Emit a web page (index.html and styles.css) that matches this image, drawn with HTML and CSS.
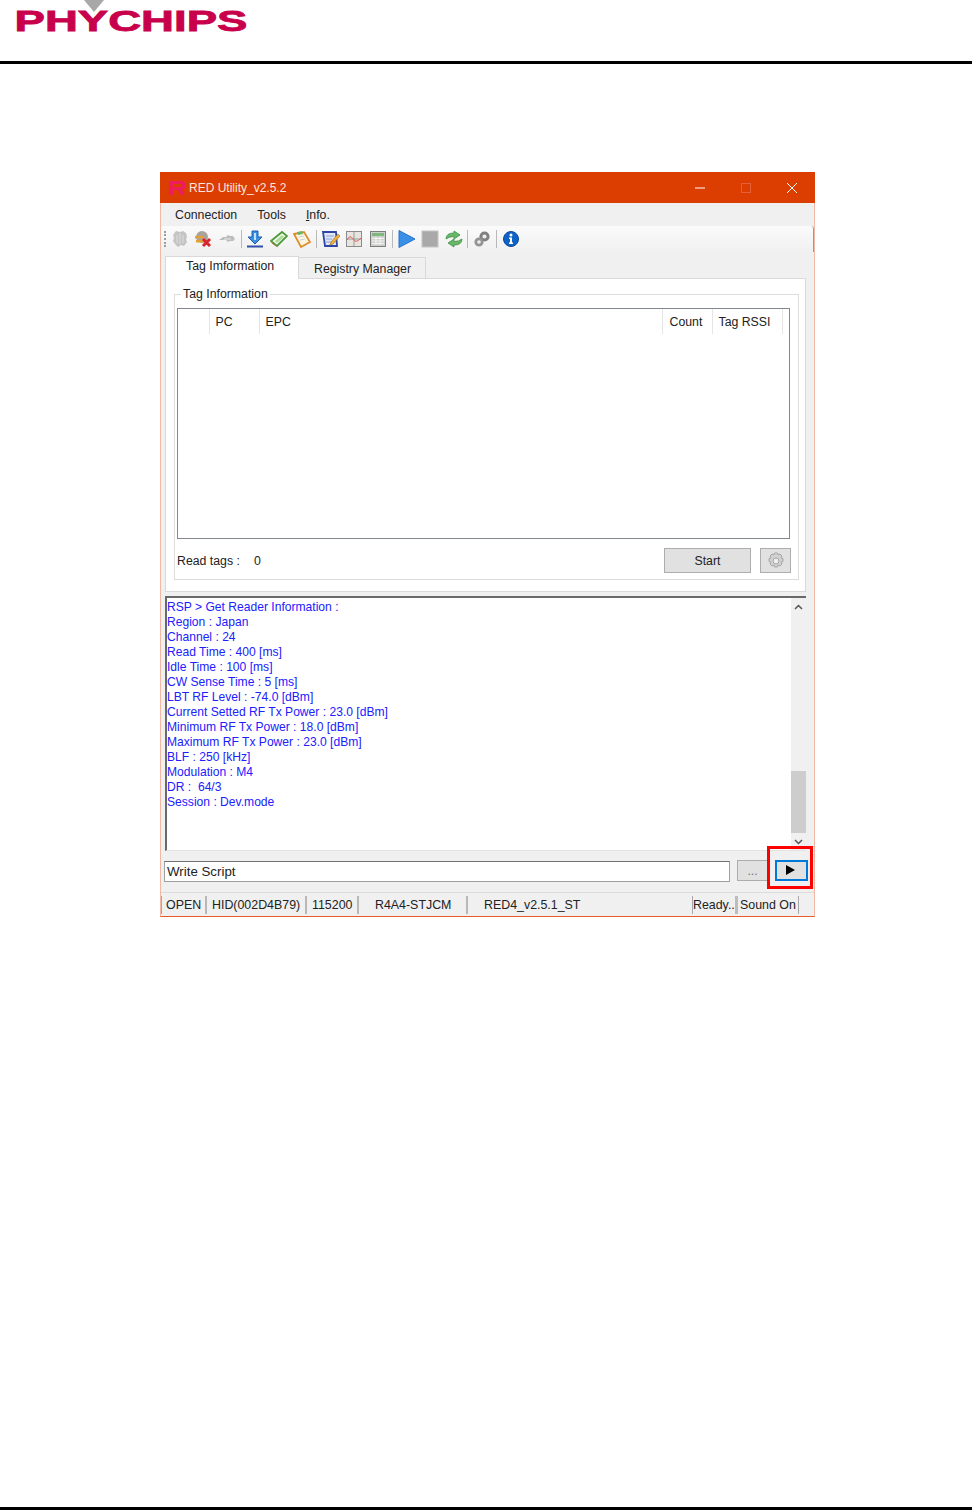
FILE: index.html
```html
<!DOCTYPE html>
<html lang="en">
<head>
<meta charset="utf-8">
<title>RED Utility</title>
<link rel="stylesheet" href="styles.css">
</head>
<body>
<div class="page">
  <header class="doc-header">
    <svg class="logo" width="250" height="40" viewBox="0 0 250 40">
      <polygon points="84,0 104,0 94,12" fill="#a8a8a8"/>
      <text class="logo-text" x="14.500" y="31" textLength="233" lengthAdjust="spacingAndGlyphs">PHYCHIPS</text>
    </svg>
  </header>
  <main class="doc-main">
    <section class="window">
      <div class="titlebar">
        <svg class="app-icon" width="18" height="14" viewBox="0 0 18 14"><path d="M1 0h13q3 0 3 3v3q0 3-3 3l3 5h-4l-3-5H5v5H1zM5 3v3h8V3z" fill="#ee1c5c"/></svg>
        <span class="title-text">RED Utility_v2.5.2</span>
        <div class="win-controls">
          <svg width="12" height="12" viewBox="0 0 12 12"><path d="M1 6h10" stroke="#fff" stroke-width="1"/></svg>
          <svg class="win-max" width="12" height="12" viewBox="0 0 12 12"><rect x="1.5" y="1.5" width="9" height="9" fill="none" stroke="#e8603a"/></svg>
          <svg width="12" height="12" viewBox="0 0 12 12"><path d="M1 1l10 10M11 1L1 11" stroke="#fff" stroke-width="1"/></svg>
        </div>
      </div>
      <div class="window-body">
        <nav class="menubar">
          <span class="menu-item menu-conn">Connection</span>
          <span class="menu-item menu-tools">Tools</span>
          <span class="menu-item"><u>I</u>nfo.</span>
        </nav>
        <div class="toolbar">
          <span class="grip"></span>
          <span class="tool"><svg width="18" height="18" viewBox="0 0 18 18"><path d="M5 1l4 1 3-1 3 2 1 4-1 2 1 3-3 4-3-1-3 2-3-3-2-3 1-3-1-3z" fill="#c4c4c4"/><path d="M9 3v11M6 5v8M12 5v8" stroke="#dedede"/></svg></span>
          <span class="tool"><svg width="18" height="18" viewBox="0 0 18 18"><circle cx="8" cy="7" r="6" fill="#a9a49a"/><path d="M1 6h9v2.500H1zM2 10h7v2.500H2z" fill="#e3a13a"/><path d="M9 9l7 7M16 9l-7 7" stroke="#d9232a" stroke-width="3"/></svg></span>
          <span class="tool"><svg width="18" height="18" viewBox="0 0 18 18"><path d="M1 10l4-3h3l2-2 2 1 3 0 2 3-2 2-3 0-2 1-2-2H5z" fill="#bdbdbd"/><path d="M6 9h7" stroke="#e8e8e8"/></svg></span>
          <span class="tool-sep"></span>
          <span class="tool"><svg width="18" height="18" viewBox="0 0 18 18"><path d="M6 1h6v6h4l-7 7-7-7h4z" fill="#3b8fe0" stroke="#1d5fb0"/><path d="M8 3h2v7H8z" fill="#bfe0fa"/><path d="M1 16.5h16" stroke="#2f4fa8" stroke-width="2"/></svg></span>
          <span class="tool"><svg width="18" height="18" viewBox="0 0 18 18"><path d="M1 11l11-9 5 4-10 10z" fill="#f4fbef" stroke="#4e9b3c" stroke-width="1.800"/><path d="M5 11l7-6 2 2-7 6z" fill="#a9dc98"/><path d="M1 11l2 3 4 2" stroke="#9c7a35" fill="none"/></svg></span>
          <span class="tool"><svg width="18" height="18" viewBox="0 0 18 18"><path d="M1 4l10-2 6 10-9 5z" fill="#fdf5e0" stroke="#df8e2e" stroke-width="1.800"/><path d="M4 2l5-1 1 3-5 1z" fill="#67b566"/><path d="M6 7l5-1M7 10l5-1" stroke="#c9d3dc"/></svg></span>
          <span class="tool-sep"></span>
          <span class="tool"><svg width="18" height="18" viewBox="0 0 18 18"><path d="M1 2h13l1 14H3z" fill="#dfe6f7" stroke="#2e46a5" stroke-width="1.800"/><path d="M4 6h8M4 9h6M4 12h5" stroke="#8fa0cf"/><path d="M9 12l7-8 2 2-7 8-3 1z" fill="#f2b13a" stroke="#9c6a1c" stroke-width=".6"/></svg></span>
          <span class="tool"><svg width="18" height="18" viewBox="0 0 18 18"><rect x="1.5" y="1.5" width="15" height="15" fill="#e8e5e1" stroke="#8b8b8b"/><path d="M9 2v14M2 9h14" stroke="#9a9a9a"/><path d="M2 10q3-6 6-1t8-1" fill="none" stroke="#e0605a"/></svg></span>
          <span class="tool"><svg width="18" height="18" viewBox="0 0 18 18"><rect x="1.5" y="1.5" width="15" height="15" fill="#cfcfcd" stroke="#7d7d7d"/><rect x="3" y="3" width="12" height="3" fill="#7fb77e"/><path d="M3 8.500h12M3 11h12M3 13.500h12M7 7v8M11 7v8" stroke="#f5f5f5"/></svg></span>
          <span class="tool-sep"></span>
          <span class="tool"><svg width="18" height="18" viewBox="0 0 18 18"><path d="M1 0.500l16 8.500-16 8.500z" fill="#3a90e6" stroke="#2a73c4"/></svg></span>
          <span class="tool"><svg width="18" height="18" viewBox="0 0 18 18"><rect x="1" y="1" width="16" height="16" fill="#a9a9a9" stroke="#c4c4c4"/></svg></span>
          <span class="tool"><svg width="18" height="18" viewBox="0 0 18 18"><path d="M1 9q0-6 8-6V1l6 4-6 4V6.500Q4 6.500 1 9zM17 9q0 6-8 6v2l-6-4 6-4v2.500q5 0 8-2.500z" fill="#68b868" stroke="#3f8f45" stroke-width=".8"/></svg></span>
          <span class="tool-sep"></span>
          <span class="tool"><svg width="18" height="18" viewBox="0 0 18 18"><circle cx="11.500" cy="6.500" r="3.600" fill="#eee" stroke="#808080" stroke-width="3"/><circle cx="6" cy="12" r="3.200" fill="#eee" stroke="#949494" stroke-width="2.800"/></svg></span>
          <span class="tool-sep"></span>
          <span class="tool"><svg width="18" height="18" viewBox="0 0 18 18"><circle cx="9" cy="9" r="7.500" fill="#0f62c6" stroke="#0a4a9a"/><circle cx="9" cy="5" r="1.500" fill="#fff"/><path d="M7 7.500h3v5h1v1.500H7v-1.500h1v-3.500H7z" fill="#fff"/></svg></span>
        </div>

        <div class="tabs">
          <span class="tab tab-active">Tag Imformation</span>
          <span class="tab tab-idle">Registry Manager</span>
        </div>
        <div class="tab-panel">
          <fieldset class="group">
            <legend class="group-title">Tag Information</legend>
            <div class="listview">
              <div class="list-head">
                <span class="col"></span>
                <span class="col">PC</span>
                <span class="col">EPC</span>
                <span class="col col-count">Count</span>
                <span class="col">Tag RSSI</span>
              </div>
            </div>
            <div class="read-row">
              <span class="read-label">Read tags :</span>
              <span class="read-count">0</span>
              <button class="btn btn-start">Start</button>
              <button class="btn btn-gear" aria-label="Settings"><svg width="18" height="18" viewBox="0 0 18 18"><path d="M7.500 1h3l.5 2 2-1 2 2-1 2 2 .500v3l-2 .500 1 2-2 2-2-1-.5 2h-3l-.5-2-2 1-2-2 1-2-2-.500v-3l2-.500-1-2 2-2 2 1z" fill="#d2d2d2" stroke="#a6a6a6"/><circle cx="9" cy="9" r="3" fill="#eee" stroke="#a6a6a6"/></svg></button>
            </div>
          </fieldset>
        </div>

        <div class="log">
          <div class="log-lines">
            <div>RSP &gt; Get Reader Information :</div>
            <div>Region : Japan</div>
            <div>Channel : 24</div>
            <div>Read Time : 400 [ms]</div>
            <div>Idle Time : 100 [ms]</div>
            <div>CW Sense Time : 5 [ms]</div>
            <div>LBT RF Level : -74.0 [dBm]</div>
            <div>Current Setted RF Tx Power : 23.0 [dBm]</div>
            <div>Minimum RF Tx Power : 18.0 [dBm]</div>
            <div>Maximum RF Tx Power : 23.0 [dBm]</div>
            <div>BLF : 250 [kHz]</div>
            <div>Modulation : M4</div>
            <div>DR :&nbsp; 64/3</div>
            <div>Session : Dev.mode</div>
          </div>
          <div class="scrollbar">
            <svg class="chev" width="9" height="6" viewBox="0 0 9 6"><path d="M1 5l3.500-3.500L8 5" fill="none" stroke="#555" stroke-width="1.500"/></svg>
            <span class="thumb"></span>
            <svg class="chev" width="9" height="6" viewBox="0 0 9 6"><path d="M1 1l3.500 3.500L8 1" fill="none" stroke="#555" stroke-width="1.500"/></svg>
          </div>
        </div>

        <div class="script-row">
          <div class="script-input">Write Script</div>
          <button class="btn btn-dots">...</button>
          <button class="btn btn-play" aria-label="Run"><svg width="10" height="10" viewBox="0 0 10 10"><path d="M1 0l9 5-9 5z" fill="#000"/></svg></button>
          <span class="red-mark"></span>
        </div>

        <footer class="statusbar">
          <span class="cell">OPEN</span>
          <span class="cell cell-mid">HID(002D4B79)</span>
          <span class="cell cell-mid">115200</span>
          <span class="cell cell-wide">R4A4-STJCM</span>
          <span class="cell cell-wide">RED4_v2.5.1_ST</span>
          <span class="cell cell-tight">Ready..</span>
          <span class="cell cell-sound">Sound On</span>
        </footer>
      </div>
    </section>
  </main>
  <div class="doc-footer"></div>
</div>
</body>
</html>
```
FILE: styles.css
```css
* { box-sizing: border-box; }
html, body { margin: 0; padding: 0; background: #fff; }
body { font-family: "Liberation Sans", Arial, sans-serif; font-size: 12.3px; color: #222; }

.page { width: 978px; height: 1510px; display: flex; flex-direction: column; }
.doc-header { width: 972px; height: 64px; border-bottom: 3px solid #000; flex: none; }
.logo { display: block; }
.logo-text { font-family: "Liberation Sans", Arial, sans-serif; font-weight: 700; font-size: 30px; fill: #c8004b; stroke: #c8004b; stroke-width: .8px; }
.doc-main { flex: 1; padding: 108px 0 0 160px; }
.doc-footer { width: 972px; height: 3px; background: #000; flex: none; }

.window { width: 655px; }
.titlebar { height: 31px; background: #db3e00; display: flex; align-items: center; padding-left: 8px; color: #fff; font-size: 12px; }
.app-icon { flex: none; margin-right: 3px; }
.title-text { color: #fbe6dd; }
.win-controls { margin-left: auto; display: flex; align-items: center; gap: 34px; padding-right: 17px; }

.window-body { background: #f0f0f0; border-left: 1px solid #f2b8a4; border-right: 1px solid #f2b8a4; border-bottom: 1px solid #e8592a; height: 714px; display: flex; flex-direction: column; }

.menubar { height: 23px; display: flex; align-items: center; padding-left: 14px; flex: none; }
.menu-item { color: #222; }
.menu-conn { margin-right: 20px; }
.menu-tools { margin-right: 20px; }

.toolbar { height: 26px; flex: none; display: flex; align-items: center; padding-left: 3px; background: linear-gradient(#fbfbfb, #f0f0f0); border-radius: 3px 3px 0 0; border-right: 1px solid #9a9a9a; }
.grip { width: 4px; height: 16px; flex: none; border-left: 2px dotted #9d9d9d; }
.tool { width: 23.5px; flex: none; display: flex; justify-content: center; }
.tool svg { display: block; }
.tool-sep { width: 5.1px; height: 18px; flex: none; background: linear-gradient(#b9b9b9, #b9b9b9) center / 1px 100% no-repeat; }

.tabs { height: 26px; flex: none; display: flex; align-items: flex-end; padding-left: 4px; }
.tab { display: flex; align-items: center; }
.tab-active { width: 134px; height: 23px; background: #fff; border: 1px solid #d9d9d9; border-bottom: 0; padding: 0 0 4px 20px; margin-bottom: -1px; position: relative; z-index: 1; }
.tab-idle { width: 127px; height: 21px; background: #f0f0f0; border: 1px solid #d9d9d9; border-left: 0; border-bottom: 0; padding: 2px 0 0 15px; }

.tab-panel { height: 314px; flex: none; margin: 0 8px 0 4px; background: #fff; border: 1px solid #d9d9d9; padding: 9px 6px 0 8px; }
.group { margin: 0; padding: 0 2px; min-width: 0; height: 292px; border: 1px solid #dcdcdc; }
.group-title { margin-left: 4px; padding: 0 2px; line-height: 13px; }

.listview { width: 613px; height: 231px; margin-top: 7px; background: #fff; border: 1px solid #828790; }
.list-head { height: 25px; display: grid; grid-template-columns: 32px 50px 403px 50px 70px; }
.col { display: flex; align-items: center; padding-left: 5.5px; border-right: 1px solid #e5e5e5; }
.col-count { padding-left: 6.5px; }

.read-row { display: flex; align-items: center; height: 25px; margin-top: 9px; }
.read-label { width: 77px; }
.read-count { width: 410px; }
.btn { font: inherit; color: #222; background: #e1e1e1; border: 1px solid #adadad; padding: 0; display: flex; align-items: center; justify-content: center; }
.btn-start { width: 87px; height: 25px; margin-right: 9px; }
.btn-gear { width: 31px; height: 25px; }

.log { height: 255px; flex: none; margin: 4px 8px 0 4px; display: flex; background: #fff; border-top: 2px solid #696969; border-left: 2px solid #696969; border-bottom: 1px solid #e3e3e3; }
.log-lines { flex: 1; padding: 2px 0 0 0; color: #2020ff; line-height: 15px; font-size: 12.1px; }
.scrollbar { width: 15px; flex: none; background: #f0f0f0; display: flex; flex-direction: column; align-items: center; padding-top: 6px; }
.chev { flex: none; }
.thumb { width: 15px; height: 62px; margin-top: 161px; margin-bottom: 6px; background: #cdcdcd; }

.script-row { height: 21px; flex: none; margin: 9px 0 0 3px; display: flex; align-items: flex-start; position: relative; }
.script-input { width: 566px; height: 21px; margin-top: 1px; background: #fff; border: 1px solid #a0a0a0; border-top-color: #707070; padding-left: 2px; font-size: 13.3px; line-height: 19px; }
.btn-dots { width: 31px; height: 21px; margin-left: 7px; color: #777; }
.btn-play { width: 33px; height: 21px; margin-left: 7px; padding: 0 3px 1px 0; border: 2px solid #0078d7; }
.red-mark { position: absolute; left: 603px; top: -14px; width: 46px; height: 43px; border: 3.500px solid #f00; }

.statusbar { margin-top: 11px; height: 24px; flex: none; border-top: 1px solid #dcdcdc; display: grid; grid-template-columns: 44px 100px 52px 109px 226px 43px 64px; align-items: center; font-size: 12.4px; }
.cell { height: 18px; line-height: 18px; padding-left: 4px; border-left: 1px solid #a8a8a8; white-space: nowrap; }
.cell-mid { padding-left: 5px; border-left: 2px solid #b8b8b8; }
.cell-wide { padding-left: 16px; border-left: 2px solid #b8b8b8; }
.cell-tight { padding-left: 0; border-left: 1px solid #a8a8a8; }
.cell-sound { padding-left: 2px; border-left: 3px solid #bdbdbd; border-right: 1px solid #a8a8a8; }
```
